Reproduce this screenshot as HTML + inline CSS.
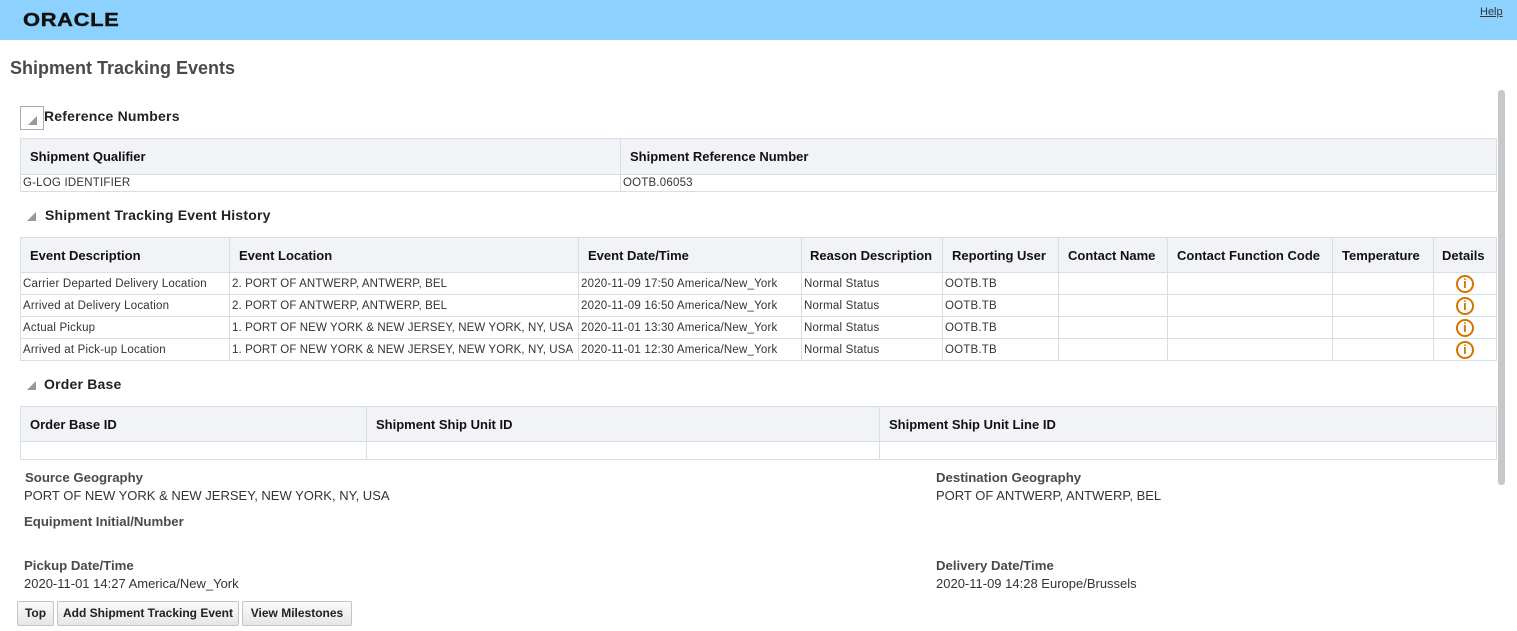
<!DOCTYPE html>
<html><head><style>
*{margin:0;padding:0;box-sizing:border-box}
body{width:1517px;height:631px;overflow:hidden;background:#fff;font-family:"Liberation Sans",Arial,sans-serif;color:#333;position:relative}
.top{position:absolute;left:0;top:0;width:1517px;height:40px;background:#8dd1ff}
.logo{position:absolute;left:23px;top:10px;font-size:18px;font-weight:900;letter-spacing:.5px;color:#111;transform:scaleX(1.22);transform-origin:left;-webkit-text-stroke:.4px #111}
.help{position:absolute;left:1480px;top:6px;font-size:11px;color:#333;text-decoration:underline}
h1{position:absolute;left:10px;top:58px;font-size:18px;color:#4a4a4a;font-weight:bold}
.sec{position:absolute;font-size:14px;font-weight:bold;color:#222;letter-spacing:.2px}
.tri{display:inline-block;width:0;height:0;border-left:9px solid transparent;border-bottom:9px solid #999;}
table{position:absolute;left:20px;border-collapse:collapse;table-layout:fixed}
td,th{border:1px solid #d6dfe6;white-space:nowrap;overflow:hidden}
th{background:#f1f3f6;font-size:13px;font-weight:bold;color:#111;text-align:left;padding-left:9px}
td{font-size:11.5px;padding-left:2px;color:#333;letter-spacing:.2px}
td.loc{letter-spacing:.1px}
.lbl{position:absolute;font-size:13.2px;font-weight:bold;color:#4a4a4a}
.val{position:absolute;font-size:13px;color:#333}
.btn{position:absolute;top:601px;height:25px;border:1px solid #c4c4c4;background:linear-gradient(#fafafa,#e6e6e6);font-size:12px;font-weight:bold;color:#222;line-height:23px;text-align:center;border-radius:2px}
.info{display:inline-block;width:18px;height:18px;border:2px solid #d47500;border-radius:50%;color:#d47500;font-weight:bold;font-size:13px;line-height:14px;text-align:center;vertical-align:middle}
</style></head><body>
<div class="top"><div class="logo">ORACLE</div><div class="help">Help</div></div>
<h1>Shipment Tracking Events</h1>
<div style="position:absolute;left:20px;top:106px;width:24px;height:24px;border:1px solid #aaa;"><span class="tri" style="position:absolute;left:7px;top:9px"></span></div>
<div class="sec" style="left:44px;top:108px">Reference Numbers</div>
<table style="top:138px;width:1477px">
<colgroup><col style="width:600px"><col></colgroup>
<tr style="height:36px"><th>Shipment Qualifier</th><th>Shipment Reference Number</th></tr>
<tr style="height:17px"><td>G-LOG IDENTIFIER</td><td>OOTB.06053</td></tr>
</table>
<span class="tri" style="position:absolute;left:27px;top:212px"></span>
<div class="sec" style="left:45px;top:207px">Shipment Tracking Event History</div>
<table style="top:237px;width:1477px">
<colgroup><col style="width:209px"><col style="width:349px"><col style="width:223px"><col style="width:141px"><col style="width:116px"><col style="width:109px"><col style="width:165px"><col style="width:101px"><col></colgroup>
<tr style="height:35px"><th>Event Description</th><th>Event Location</th><th>Event Date/Time</th><th style="padding-left:8px">Reason Description</th><th>Reporting User</th><th>Contact Name</th><th>Contact Function Code</th><th>Temperature</th><th style="padding-left:8px">Details</th></tr>
<tr style="height:22px"><td>Carrier Departed Delivery Location</td><td class="loc">2. PORT OF ANTWERP, ANTWERP, BEL</td><td>2020-11-09 17:50 America/New_York</td><td>Normal Status</td><td>OOTB.TB</td><td></td><td></td><td></td><td style="text-align:center;padding:0"><span class="info">i</span></td></tr>
<tr style="height:22px"><td>Arrived at Delivery Location</td><td class="loc">2. PORT OF ANTWERP, ANTWERP, BEL</td><td>2020-11-09 16:50 America/New_York</td><td>Normal Status</td><td>OOTB.TB</td><td></td><td></td><td></td><td style="text-align:center;padding:0"><span class="info">i</span></td></tr>
<tr style="height:22px"><td>Actual Pickup</td><td class="loc">1. PORT OF NEW YORK &amp; NEW JERSEY, NEW YORK, NY, USA</td><td>2020-11-01 13:30 America/New_York</td><td>Normal Status</td><td>OOTB.TB</td><td></td><td></td><td></td><td style="text-align:center;padding:0"><span class="info">i</span></td></tr>
<tr style="height:22px"><td>Arrived at Pick-up Location</td><td class="loc">1. PORT OF NEW YORK &amp; NEW JERSEY, NEW YORK, NY, USA</td><td>2020-11-01 12:30 America/New_York</td><td>Normal Status</td><td>OOTB.TB</td><td></td><td></td><td></td><td style="text-align:center;padding:0"><span class="info">i</span></td></tr>
</table>
<span class="tri" style="position:absolute;left:27px;top:381px"></span>
<div class="sec" style="left:44px;top:376px">Order Base</div>
<table style="top:406px;width:1477px">
<colgroup><col style="width:346px"><col style="width:513px"><col></colgroup>
<tr style="height:35px"><th>Order Base ID</th><th>Shipment Ship Unit ID</th><th>Shipment Ship Unit Line ID</th></tr>
<tr style="height:18px"><td></td><td></td><td></td></tr>
</table>
<div class="lbl" style="left:25px;top:470px">Source Geography</div>
<div class="val" style="left:24px;top:488px">PORT OF NEW YORK &amp; NEW JERSEY, NEW YORK, NY, USA</div>
<div class="lbl" style="left:936px;top:470px">Destination Geography</div>
<div class="val" style="left:936px;top:488px">PORT OF ANTWERP, ANTWERP, BEL</div>
<div class="lbl" style="left:24px;top:514px">Equipment Initial/Number</div>
<div class="lbl" style="left:24px;top:558px">Pickup Date/Time</div>
<div class="val" style="left:24px;top:576px">2020-11-01 14:27 America/New_York</div>
<div class="lbl" style="left:936px;top:558px">Delivery Date/Time</div>
<div class="val" style="left:936px;top:576px">2020-11-09 14:28 Europe/Brussels</div>
<div class="btn" style="left:17px;width:37px">Top</div>
<div class="btn" style="left:57px;width:182px">Add Shipment Tracking Event</div>
<div class="btn" style="left:242px;width:110px">View Milestones</div>
<div style="position:absolute;left:1498px;top:90px;width:7px;height:395px;background:#c8c8c8;border-radius:3px"></div>
</body></html>
